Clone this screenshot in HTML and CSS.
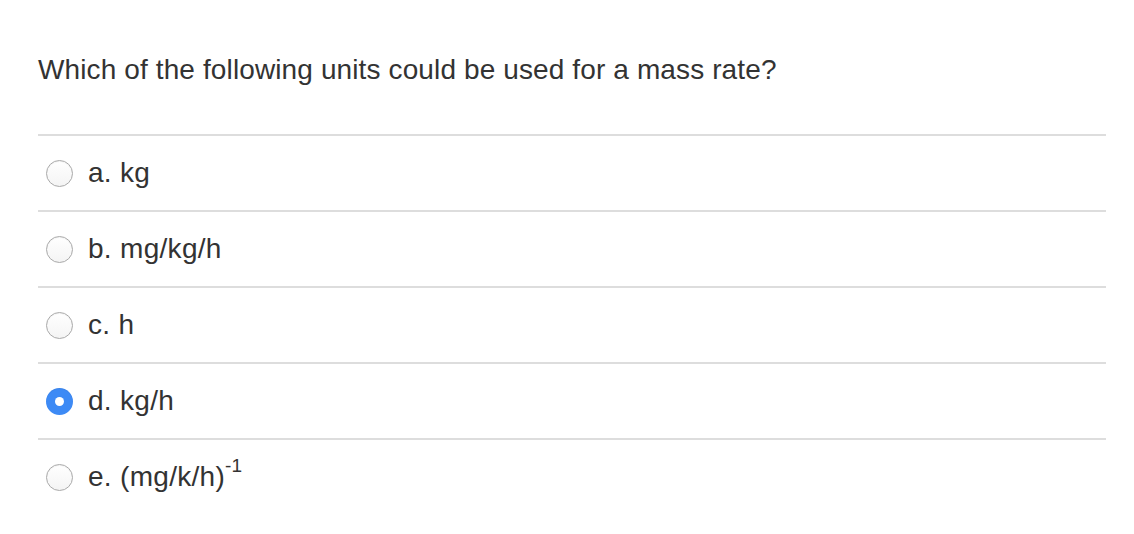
FILE: index.html
```html
<!DOCTYPE html>
<html lang="en">
<head>
<meta charset="utf-8">
<title>Question</title>
<link rel="stylesheet" href="styles.css">
</head>
<body>
<div class="quiz">
  <p class="question">Which of the following units could be used for a mass rate?</p>
  <div class="options">
    <label class="option"><span class="radio"></span><span class="label">a. kg</span></label>
    <label class="option"><span class="radio"></span><span class="label">b. mg/kg/h</span></label>
    <label class="option"><span class="radio"></span><span class="label">c. h</span></label>
    <label class="option"><span class="radio checked"></span><span class="label">d. kg/h</span></label>
    <label class="option"><span class="radio"></span><span class="label">e. (mg/k/h)<sup class="sup">-1</sup></span></label>
  </div>
</div>
</body>
</html>
```
FILE: styles.css
```css
html, body {
  margin: 0;
  padding: 0;
  background: #ffffff;
}
body {
  font-family: "Liberation Sans", Arial, Helvetica, sans-serif;
  color: #333333;
}
.quiz {
  padding: 54px 28px 0 38px;
}
.question {
  margin: 0 0 48px 0;
  font-size: 28px;
  line-height: 32px;
  letter-spacing: 0.12px;
}
.options {
  display: flex;
  flex-direction: column;
}
.option {
  display: flex;
  align-items: center;
  height: 74px;
  border-top: 2px solid #dddddd;
}
.radio {
  box-sizing: border-box;
  width: 27px;
  height: 27px;
  margin-left: 8px;
  margin-right: 15px;
  border-radius: 50%;
  border: 1px solid #a9a9a9;
  background: linear-gradient(#ffffff, #f4f4f4);
  box-shadow: inset 0 1px 1px rgba(0,0,0,0.05);
  flex: none;
}
.radio.checked {
  border: none;
  background: #3d8af5;
  position: relative;
}
.radio.checked::after {
  content: "";
  position: absolute;
  left: 9px;
  top: 9px;
  width: 9px;
  height: 9px;
  border-radius: 50%;
  background: #ffffff;
}
.label {
  font-size: 28px;
  line-height: 32px;
  letter-spacing: 0.3px;
}
.sup {
  font-size: 19px;
  line-height: 0;
  position: relative;
  vertical-align: 0;
  top: -14px;
  letter-spacing: 0;
}
```
